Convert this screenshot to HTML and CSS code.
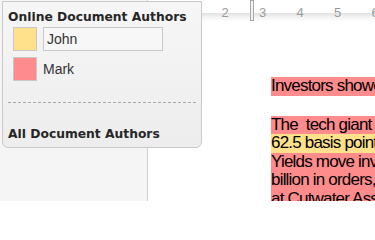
FILE: index.html
```html
<!DOCTYPE html>
<html>
<head>
<meta charset="utf-8">
<link rel="stylesheet" href="styles.css">
</head>
<body>
<div class="app">
  <aside class="side"></aside>
  <main class="main">
    <div class="ruler">
      <div class="ticks"><span>2</span><span>3</span><span>4</span><span>5</span><span>6</span></div>
      <div class="indent"></div>
    </div>
    <div class="doc">
      <p class="para"><span class="ln red">Investors showed strong demand for the new debt.</span></p>
      <p class="para">
        <span class="ln red">The  tech giant sold $17 billion of bonds, paying</span>
        <span class="ln yellow">62.5 basis points over Treasuries on the longest</span>
        <span class="ln red">Yields move inversely to prices as it drew $52</span>
        <span class="ln red">billion in orders, said a strategist</span>
        <span class="ln red">at Cutwater Asset Management in New York.</span>
      </p>
    </div>
  </main>
  <section class="authors">
    <h2 class="title">Online Document Authors</h2>
    <ul class="list">
      <li class="row"><span class="swatch swatch-yellow"></span><input class="name-input" type="text" value="John"></li>
      <li class="row"><span class="swatch swatch-red"></span><span class="name">Mark</span></li>
    </ul>
    <hr class="divider">
    <h2 class="title title-all">All Document Authors</h2>
  </section>
</div>
</body>
</html>
```
FILE: styles.css
```css
html, body {
  margin: 0;
  padding: 0;
  width: 375px;
  height: 201px;
  overflow: hidden;
  background: #fff;
}

.app {
  position: relative;
  display: flex;
  width: 375px;
  height: 201px;
}

.side {
  flex: none;
  width: 147px;
  background: #f5f5f5;
  border-right: 1px solid #cfcfcf;
}

.main {
  flex: 1;
  min-width: 0;
  overflow: hidden;
  background: #fff;
}

.ruler {
  position: relative;
  height: 22px;
  background: linear-gradient(to bottom, #fff 0, #fff 13px, #e1e1e1 13px, #f3f3f3 17px, #fff 22px);
}

.ticks {
  display: flex;
  padding: 5px 0 0 58.25px;
  font: 13px/15px "Liberation Sans", Arial, sans-serif;
  color: #9a9a9a;
}

.ticks span {
  flex: none;
  width: 37.5px;
  text-align: center;
}

.indent {
  position: absolute;
  left: 102px;
  top: 0;
  width: 2px;
  height: 19px;
  border: 1px solid #a8a8a8;
  background: #f2f2f2;
}

.doc {
  padding: 55px 0 0 123px;
}

.para {
  margin: 0 0 20px;
}

.ln {
  display: block;
  white-space: pre;
  font: 17px/18.5px "Liberation Sans", Arial, sans-serif;
  letter-spacing: -0.8px;
  color: #000;
}

.red {
  background: #ff8c8c;
}

.yellow {
  background: #ffe18c;
}

.authors {
  position: absolute;
  left: 2px;
  top: 1px;
  width: 188px;
  padding: 8px 5px 6px;
  border: 1px solid #c9c9c9;
  border-radius: 0 0 6px 6px;
  background: linear-gradient(to bottom, #f6f6f6, #ededed);
}

.title {
  margin: 0;
  font: bold 12.3px/14px "DejaVu Sans", Verdana, sans-serif;
  color: #262626;
}

.list {
  display: flex;
  flex-direction: column;
  gap: 6px;
  margin: 3px 0 0;
  padding: 0 0 0 5px;
  list-style: none;
}

.row {
  display: flex;
  align-items: center;
  gap: 6px;
  height: 24px;
}

.swatch {
  flex: none;
  width: 22px;
  height: 22px;
  border: 1px solid #c8c8c8;
}

.swatch-yellow {
  background: #ffe18c;
}

.swatch-red {
  background: #ff8c8c;
}

.name-input {
  box-sizing: border-box;
  width: 120px;
  height: 24px;
  margin: 0;
  padding: 0 3px;
  border: 1px solid #c8c8c8;
  background: #f7f7f7;
  font: 14px "Liberation Sans", Arial, sans-serif;
  color: #333;
  outline: none;
}

.name {
  font: 14px/16px "Liberation Sans", Arial, sans-serif;
  color: #333;
}

.divider {
  height: 0;
  margin: 21px 0 0;
  border: 0;
  border-top: 1px dashed #a9a9a9;
}

.title-all {
  margin-top: 24px;
}
```
